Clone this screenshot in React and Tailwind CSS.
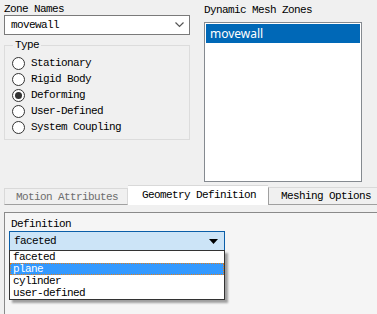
import React from "react";

const mono = { fontFamily: '"Liberation Mono", "DejaVu Sans Mono", monospace' };

function Radio({ label, checked }) {
  return (
    <div className="flex items-center h-[16px]">
      <span className="w-[13px] h-[13px] rounded-full border border-[#333] bg-white flex items-center justify-center ml-[7px]">
        {checked && <span className="w-[7px] h-[7px] rounded-full bg-[#333]" />}
      </span>
      <span className="ml-[6px] text-[11px] leading-[16px] tracking-[-0.6px] text-black">{label}</span>
    </div>
  );
}

export default function App() {
  return (
    <div
      className="w-[377px] h-[314px] bg-[#f0f0f0] overflow-hidden flex flex-col text-black"
      style={mono}
    >
      {/* top */}
      <div className="flex pl-[4px] pt-[3px] h-[183px]">
        <div className="w-[186px] flex flex-col">
          <div className="text-[11px] leading-[12px] tracking-[-0.6px]">Zone Names</div>
          <div className="h-[20px] border border-[#7a7a7a] bg-white flex items-center justify-between pl-[6px] pr-[5px]">
            <span className="text-[11px] tracking-[-0.6px]">movewall</span>
            <svg width="9" height="6" viewBox="0 0 9 6">
              <path d="M0.5 0.5 L4.5 4.5 L8.5 0.5" fill="none" stroke="#555" strokeWidth="1.2" />
            </svg>
          </div>
          <div className="relative mt-[10px] h-[95px] border border-[#dcdcdc] pt-[9px]">
            <span className="absolute left-[8px] top-[-7px] px-[2px] bg-[#f0f0f0] text-[11px] leading-[12px] tracking-[-0.6px]">
              Type
            </span>
            <Radio label="Stationary" />
            <Radio label="Rigid Body" />
            <Radio label="Deforming" checked />
            <Radio label="User-Defined" />
            <Radio label="System Coupling" />
          </div>
        </div>
        <div className="ml-[14px] w-[158px] mt-[1px] flex flex-col">
          <div className="text-[11px] leading-[12px] tracking-[-0.6px]">Dynamic Mesh Zones</div>
          <div className="mt-[6px] h-[160px] border border-[#858a90] bg-white p-[1px]">
            <div
              className="h-[19px] bg-[#0068b7] text-white text-[12px] leading-[19px] pl-[4px]"
              style={{ fontFamily: '"Noto Sans", "Open Sans", sans-serif' }}
            >
              movewall
            </div>
          </div>
        </div>
      </div>

      {/* tabs */}
      <div className="flex h-[22px] pl-[4px] items-end">
        <div className="w-[124px] h-[17px] border-t border-l border-r border-[#d9d9d9] border-b-[#a0a0a0] border-b text-[#6d6d6d] text-[11px] leading-[16px] tracking-[-0.6px] pl-[11px]">
          Motion Attributes
        </div>
        <div className="w-[140px] h-[20px] bg-white border-t border-[#d9d9d9] text-[11px] leading-[19px] tracking-[-0.6px] pl-[14px]">
          Geometry Definition
        </div>
        <div className="flex-1 h-[18px] border-t border-l border-b border-[#a0a0a0] border-t-[#d9d9d9] text-[11px] leading-[17px] tracking-[-0.6px] pl-[12px]">
          Meshing Options
        </div>
      </div>

      {/* panel */}
      <div className="mt-[7px] ml-[4px] flex-1 bg-[#f5f5f5] border-l border-t border-[#8a8a8a] pl-[4px] pt-[5px]">
        <div className="text-[11px] leading-[12px] tracking-[-0.6px] ml-[2px]">Definition</div>
        <div className="relative mt-[1px] w-[216px]">
          <div className="h-[20px] border border-[#0a5ea8] bg-[#cce4f7] flex items-center justify-between pl-[4px] pr-[6px]">
            <span className="text-[11px] tracking-[-0.6px]">faceted</span>
            <svg width="9" height="5" viewBox="0 0 9 5">
              <path d="M0 0 L9 0 L4.5 5 Z" fill="#000" />
            </svg>
          </div>
          <div className="absolute left-0 top-[19px] w-[216px] border border-[#333] bg-white shadow-[3px_3px_2px_rgba(0,0,0,0.35)] text-[11px] tracking-[-0.6px]">
            <div className="h-[12px] leading-[12px] pl-[3px]">faceted</div>
            <div className="h-[12px] leading-[11px] pl-[2px] bg-[#3399ff] text-white border border-dotted border-[#e08020]">plane</div>
            <div className="h-[12px] leading-[12px] pl-[3px]">cylinder</div>
            <div className="h-[12px] leading-[12px] pl-[3px]">user-defined</div>
          </div>
        </div>
      </div>
    </div>
  );
}
